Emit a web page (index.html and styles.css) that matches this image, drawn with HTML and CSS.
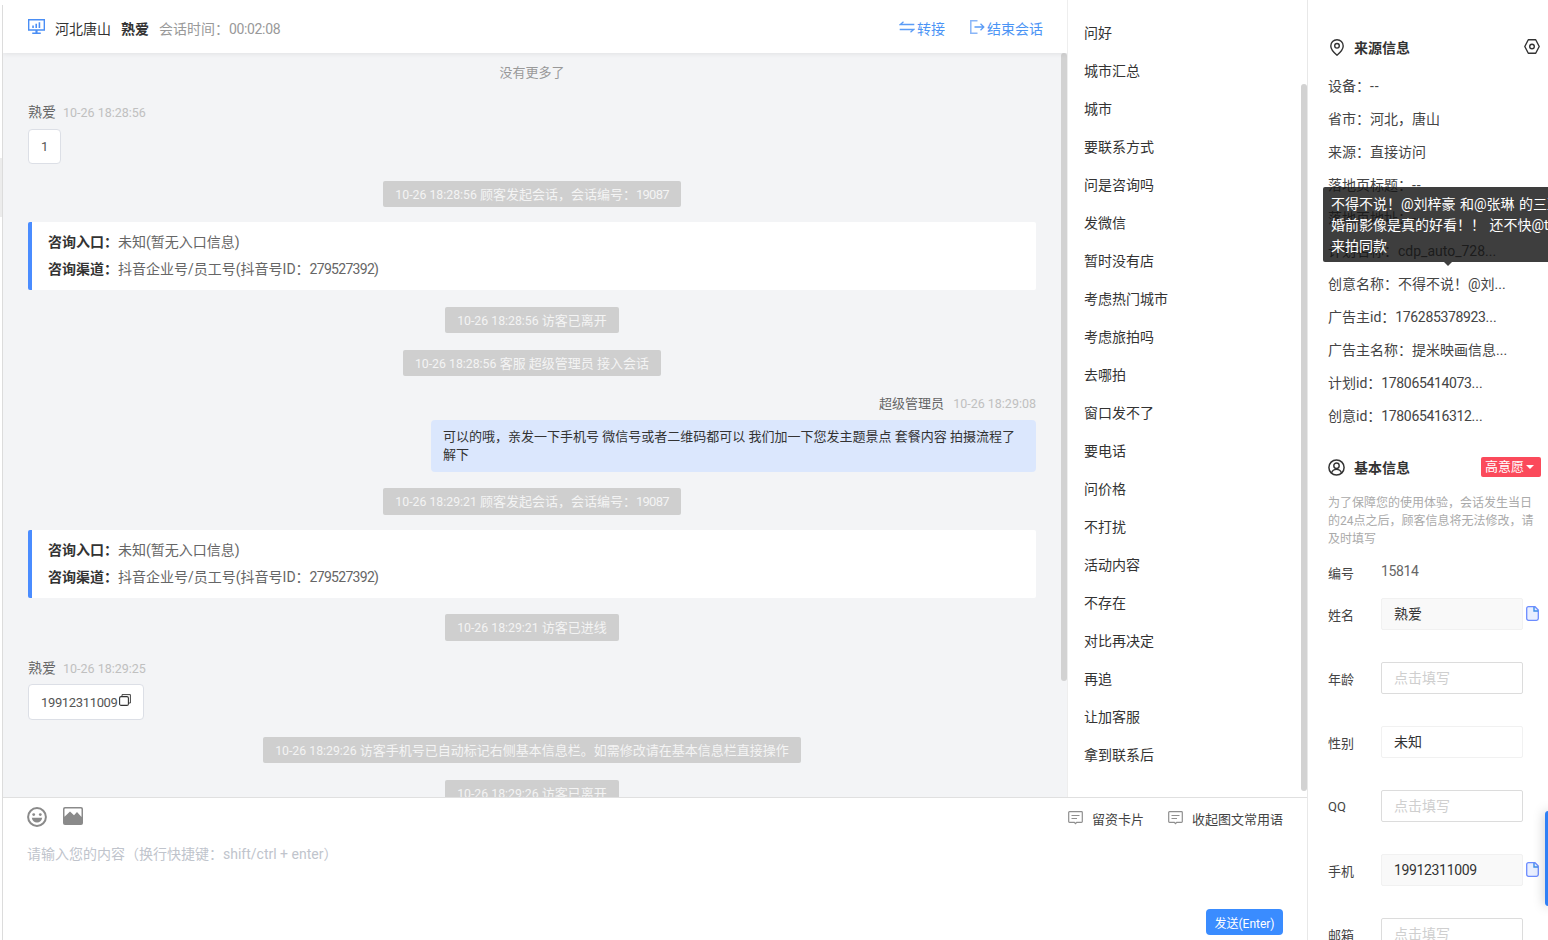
FILE: index.html
```html
<!DOCTYPE html>
<html lang="zh-CN">
<head>
<meta charset="utf-8">
<title>会话</title>
<link rel="stylesheet" href="styles.css">
</head>
<body>
<div class="app">
  <div class="rail"><div class="rail-handle"></div><div class="rail-line"></div></div>
  <div class="work">
    <div class="top">
      <section class="chat">
        <header class="chat-head">
          <svg class="ico-desktop" viewBox="0 0 16 14"><path d="M0 0h16v11H9v1.600h3V14H4v-1.400h3V11H0zM1.300 1.300v8.400h13.400V1.300z" fill="#4a8ef5"/><path d="M4 6h1.500v2.500H4zM7 4.500h1.500v4H7zM10 3h1.500v5.500H10z" fill="#4a8ef5"/></svg>
          <span class="head-city">河北唐山</span>
          <b class="head-name">熟爱</b>
          <span class="head-time">会话时间：<span class="num">00:02:08</span></span>
          <span class="head-actions">
            <a class="head-link"><svg class="ico-transfer" viewBox="0 0 16 12"><path d="M4.500.8 1.300 3.500h14M11.500 11.200l3.200-2.700H.7" fill="none" stroke="#5b9cf6" stroke-width="1.300"/></svg>转接</a>
            <a class="head-link head-link-end"><svg class="ico-exit" viewBox="0 0 15 14"><path d="M7.500.8H.8v12.400h6.700" fill="none" stroke="#8ab6f8" stroke-width="1.500"/><path d="M4.500 7h9M10.500 3.800 13.800 7l-3.300 3.200" fill="none" stroke="#5b9cf6" stroke-width="1.300"/></svg>结束会话</a>
          </span>
        </header>
        <div class="log">
          <div class="no-more">没有更多了</div>
          <div class="author author-first">熟爱<span class="stamp">10-26 18:28:56</span></div>
          <div class="bubble bubble-one">1</div>
          <div class="notice"><span class="notice-time">10-26 18:28:56</span> 顾客发起会话，会话编号：<span class="num">19087</span></div>
          <div class="card">
            <div><b>咨询入口：</b>未知(暂无入口信息)</div>
            <div><b>咨询渠道：</b>抖音企业号/员工号(抖音号ID：<span class="num">279527392</span>)</div>
          </div>
          <div class="notice"><span class="notice-time">10-26 18:28:56</span> 访客已离开</div>
          <div class="notice"><span class="notice-time">10-26 18:28:56</span> 客服 超级管理员 接入会话</div>
          <div class="author author-right">超级管理员<span class="stamp">10-26 18:29:08</span></div>
          <div class="bubble-me">可以的哦，亲发一下手机号 微信号或者二维码都可以 我们加一下您发主题景点 套餐内容 拍摄流程了解下</div>
          <div class="notice"><span class="notice-time">10-26 18:29:21</span> 顾客发起会话，会话编号：<span class="num">19087</span></div>
          <div class="card">
            <div><b>咨询入口：</b>未知(暂无入口信息)</div>
            <div><b>咨询渠道：</b>抖音企业号/员工号(抖音号ID：<span class="num">279527392</span>)</div>
          </div>
          <div class="notice"><span class="notice-time">10-26 18:29:21</span> 访客已进线</div>
          <div class="author">熟爱<span class="stamp">10-26 18:29:25</span></div>
          <div class="bubble"><span class="num">19912311009</span><svg class="ico-copy-msg" viewBox="0 0 12 12"><path d="M3 2.500V.6h8.400v8.400H9.500" fill="none" stroke="#444" stroke-width="1"/><rect x=".6" y="2.600" width="8.800" height="8.800" rx="1.500" fill="none" stroke="#333" stroke-width="1.100"/></svg></div>
          <div class="notice"><span class="notice-time">10-26 18:29:26</span> 访客手机号已自动标记右侧基本信息栏。如需修改请在基本信息栏直接操作</div>
          <div class="notice"><span class="notice-time">10-26 18:29:26</span> 访客已离开</div>
        </div>
        <div class="thumb thumb-chat"></div>
      </section>
      <aside class="quick">
        <div class="quick-item">问好</div>
        <div class="quick-item">城市汇总</div>
        <div class="quick-item">城市</div>
        <div class="quick-item">要联系方式</div>
        <div class="quick-item">问是咨询吗</div>
        <div class="quick-item">发微信</div>
        <div class="quick-item">暂时没有店</div>
        <div class="quick-item">考虑热门城市</div>
        <div class="quick-item">考虑旅拍吗</div>
        <div class="quick-item">去哪拍</div>
        <div class="quick-item">窗口发不了</div>
        <div class="quick-item">要电话</div>
        <div class="quick-item">问价格</div>
        <div class="quick-item">不打扰</div>
        <div class="quick-item">活动内容</div>
        <div class="quick-item">不存在</div>
        <div class="quick-item">对比再决定</div>
        <div class="quick-item">再追</div>
        <div class="quick-item">让加客服</div>
        <div class="quick-item">拿到联系后</div>
        <div class="thumb thumb-quick"></div>
      </aside>
    </div>
    <section class="composer">
      <div class="tools">
        <svg class="ico-emoji" viewBox="0 0 20 20"><circle cx="10" cy="10" r="8.900" fill="none" stroke="#8a8a8a" stroke-width="2"/><circle cx="6.700" cy="7.600" r="1.400" fill="#8a8a8a"/><circle cx="13.300" cy="7.600" r="1.400" fill="#8a8a8a"/><path d="M4.800 10.800h10.400c-.4 3-2.500 4.800-5.200 4.800s-4.800-1.800-5.200-4.800z" fill="#8a8a8a"/></svg>
        <svg class="ico-image" viewBox="0 0 20 18"><rect width="20" height="18" rx="2" fill="#8a8a8a"/><path d="M1.500 9.800V2.300c0-.5.300-.8.800-.8h15.400c.5 0 .8.300.8.800v7.700L14 5l-3 3.200L7 4.500z" fill="#fff"/></svg>
        <span class="tool-spacer"></span>
        <a class="tool-link"><svg class="ico-comment" viewBox="0 0 15 14"><path d="M1.500.7h12c.5 0 .8.300.8.800v9c0 .5-.3.800-.8.800H8.700l-1.200 1.400-1.200-1.400H1.500c-.5 0-.8-.3-.8-.8v-9c0-.5.300-.8.800-.8z" fill="none" stroke="#8f8f8f" stroke-width="1.200"/><path d="M3.500 4.500h8M3.500 7.500h5.500" stroke="#8f8f8f" stroke-width="1.100"/></svg>留资卡片</a>
        <a class="tool-link"><svg class="ico-comment" viewBox="0 0 15 14"><path d="M1.500.7h12c.5 0 .8.300.8.800v9c0 .5-.3.800-.8.800H8.700l-1.200 1.400-1.200-1.400H1.500c-.5 0-.8-.3-.8-.8v-9c0-.5.300-.8.800-.8z" fill="none" stroke="#8f8f8f" stroke-width="1.200"/><path d="M3.500 4.500h8M3.500 7.500h5.500" stroke="#8f8f8f" stroke-width="1.100"/></svg>收起图文常用语</a>
      </div>
      <div class="placeholder">请输入您的内容（换行快捷键：shift/ctrl + enter）</div>
      <div class="send-row"><button class="send">发送(Enter)</button></div>
    </section>
  </div>
  <aside class="info">
    <div class="info-head">
      <svg class="ico-pin" viewBox="0 0 14 17"><path d="M7 .8C3.500.8.800 3.500.8 7c0 3.700 3.300 6.800 6.200 9.200 2.900-2.400 6.200-5.500 6.200-9.200C13.200 3.500 10.500.8 7 .8z" fill="none" stroke="#333" stroke-width="1.400"/><circle cx="7" cy="6.800" r="2.300" fill="none" stroke="#333" stroke-width="1.400"/></svg>
      <b>来源信息</b>
      <svg class="ico-hex" viewBox="0 0 16 15"><path d="M4.300.8h7.400L15.200 7.500l-3.500 6.700H4.300L.8 7.500z" fill="none" stroke="#333" stroke-width="1.400" stroke-linejoin="round"/><circle cx="8" cy="7.500" r="2.300" fill="none" stroke="#333" stroke-width="1.400"/></svg>
    </div>
    <div class="info-row">设备：<span class="dash">--</span></div>
    <div class="info-row">省市：河北，唐山</div>
    <div class="info-row">来源：直接访问</div>
    <div class="info-row">落地页标题：<span class="dash">--</span></div>
    <div class="info-row">落地页地址：<span class="dash">--</span></div>
    <div class="info-row">计划名称：cdp_auto_728...</div>
    <div class="info-row">创意名称：不得不说！@刘...</div>
    <div class="info-row">广告主id：<span class="num">176285378923</span>...</div>
    <div class="info-row">广告主名称：提米映画信息...</div>
    <div class="info-row">计划id：<span class="num">178065414073</span>...</div>
    <div class="info-row">创意id：<span class="num">178065416312</span>...</div>
    <div class="info-head info-head-basic">
      <svg class="ico-user" viewBox="0 0 17 17"><circle cx="8.500" cy="8.500" r="7.600" fill="none" stroke="#333" stroke-width="1.500"/><circle cx="8.500" cy="6.700" r="2.700" fill="none" stroke="#333" stroke-width="1.400"/><path d="M3.500 14c.8-2.500 2.700-3.600 5-3.600s4.200 1.100 5 3.600" fill="none" stroke="#333" stroke-width="1.400"/></svg>
      <b>基本信息</b>
      <span class="tag">高意愿<i class="tag-caret"></i></span>
    </div>
    <p class="info-note">为了保障您的使用体验，会话发生当日的24点之后，顾客信息将无法修改，请及时填写</p>
    <div class="plain-row"><span class="field-label">编号</span><span class="plain-value num">15814</span></div>
    <div class="field"><span class="field-label">姓名</span><span class="box box-locked">熟爱</span><svg class="ico-copy" viewBox="0 0 13 15"><path d="M.7 2.500c0-1 .7-1.800 1.800-1.800h6.500l3.300 3.300v8.500c0 1-.7 1.800-1.800 1.800H2.500c-1 0-1.800-.8-1.800-1.800z" fill="#e9efff" stroke="#6c8cff" stroke-width="1.300"/><path d="M8 1v4h4" fill="none" stroke="#3f8fe8" stroke-width="1.400"/></svg></div>
    <div class="field"><span class="field-label">年龄</span><span class="box box-empty">点击填写</span></div>
    <div class="field"><span class="field-label">性别</span><span class="box box-plain">未知</span></div>
    <div class="field"><span class="field-label">QQ</span><span class="box box-empty">点击填写</span></div>
    <div class="field"><span class="field-label">手机</span><span class="box box-locked num">19912311009</span><svg class="ico-copy" viewBox="0 0 13 15"><path d="M.7 2.500c0-1 .7-1.800 1.800-1.800h6.500l3.300 3.300v8.500c0 1-.7 1.800-1.800 1.800H2.500c-1 0-1.800-.8-1.800-1.800z" fill="#e9efff" stroke="#6c8cff" stroke-width="1.300"/><path d="M8 1v4h4" fill="none" stroke="#3f8fe8" stroke-width="1.400"/></svg></div>
    <div class="field"><span class="field-label">邮箱</span><span class="box box-empty">点击填写</span></div>
    <div class="tooltip">不得不说！@刘梓豪 和@张琳 的三亚<br>婚前影像是真的好看！！ 还不快@tag<br>来拍同款<i class="tooltip-arrow"></i></div>
    <div class="float-tab"></div>
  </aside>
</div>
</body>
</html>
```
FILE: styles.css
```css
* { box-sizing: border-box; }
html, body { margin: 0; height: 100%; overflow: hidden; background: #fff; }
body { font-family: Roboto, "Noto Sans CJK SC", sans-serif; font-size: 14px; color: #333; }
svg { display: block; flex: none; }
b { font-weight: 500; }
.num { letter-spacing: -.35px; }
.dash { letter-spacing: 1px; }

.app { display: flex; height: 940px; width: 1548px; overflow: hidden; }
.rail { width: 3px; flex: none; display: flex; }
.rail-handle { width: 2px; height: 59px; margin-top: 158px; background: #ececec; }
.rail-line { width: 1px; margin-top: 5px; background: #dcdcdc; }

.work { width: 1305px; flex: none; display: flex; flex-direction: column; border-right: 1px solid #e8e8e8; }
.top { height: 797px; flex: none; display: flex; }

.chat { width: 1064px; flex: none; position: relative; display: flex; flex-direction: column; background: #f3f4f6; overflow: hidden; }
.chat-head { height: 53px; flex: none; display: flex; align-items: center; padding: 3px 24px 0 25px; background: #fff; box-shadow: 0 1px 5px rgba(0,0,0,.08); position: relative; z-index: 1; }
.ico-desktop { width: 17px; height: 15px; margin: -3px 10px 0 0; }
.head-city { color: #333; }
.head-name { margin-left: 10px; font-weight: 700; color: #333; }
.head-time { margin-left: 10px; color: #999; }
.head-actions { margin-left: auto; display: flex; }
.head-link { display: flex; align-items: center; color: #4b94f5; }
.head-link-end { margin-left: 25px; }
.ico-transfer { width: 16px; height: 12px; margin: -3px 2px 0 0; }
.ico-exit { width: 15px; height: 14px; margin: -3px 2px 0 0; }

.log { flex: 1; min-height: 0; padding: 10px 31px 0 25px; display: flex; flex-direction: column; overflow: hidden; }
.no-more { height: 20px; line-height: 20px; flex: none; text-align: center; font-size: 13px; color: #999; }
.author { height: 20px; line-height: 20px; flex: none; margin-top: 17.500px; color: #666; font-size: 14px; }
.author-first { margin-top: 19px; }
.author-right { text-align: right; font-size: 13px; }
.author-right .stamp { margin-left: 9px; }
.stamp { margin-left: 7px; font-size: 12.500px; color: #c0c0c0; }
.bubble { align-self: flex-start; flex: none; display: flex; align-items: center; height: 36px; margin-top: 6px; padding: 0 12px; font-size: 13px; color: #555; background: #fff; border: 1px solid #dcdfe6; border-radius: 4px; }
.bubble-one { margin-top: 7px; height: 35px; width: 33px; }
.ico-copy-msg { width: 12px; height: 12px; margin: -4px 0 0 1px; }
.bubble-me { align-self: flex-end; flex: none; width: 605px; margin-top: 6px; padding: 8px 12px; font-size: 13px; line-height: 18px; color: #333; background: #dbe7fd; border-radius: 4px; }
.notice { align-self: center; flex: none; height: 26.500px; line-height: 27px; margin-top: 16.500px; padding: 0 12px; white-space: nowrap; font-size: 13px; color: #f4f4f4; background: #cfcfcf; border-radius: 2px; }
.notice-time { font-size: 12.300px; }
.notice .num { letter-spacing: -.8px; }
.card { flex: none; height: 68px; margin-top: 15px; padding: 7px 16px; line-height: 27px; color: #666; background: #fff; border-left: 4px solid #4a8cff; border-radius: 2px; }
.card b { color: #333; font-weight: 700; }
.card .num { letter-spacing: -.7px; }

.thumb { position: absolute; width: 6px; background: #d2d2d2; border-radius: 3px; }
.thumb-chat { top: 53px; right: 0; height: 628px; }
.thumb-quick { top: 84px; right: 0; height: 707px; }

.quick { flex: 1; min-width: 0; position: relative; padding: 14px 0 0 16px; border-left: 1px solid #eee; background: #fff; }
.quick-item { height: 38px; line-height: 39px; color: #333; }

.composer { flex: 1; min-height: 0; border-top: 2px solid #e0e0e0; padding: 9px 24px 0 24px; display: flex; flex-direction: column; margin-top: -1px; background: #fff; }
.tools { display: flex; align-items: flex-start; height: 22px; font-size: 13px; }
.ico-emoji { width: 20px; height: 20px; }
.ico-image { width: 20px; height: 18px; margin-left: 16px; }
.tool-spacer { flex: 1; }
.tool-link { display: flex; align-items: center; margin: 1px 0 0 24px; height: 20px; color: #444; }
.ico-comment { width: 15px; height: 14px; margin-right: 9px; }
.placeholder { margin-top: 15px; height: 20px; line-height: 20px; font-size: 14px; color: #c0c4cc; }
.send-row { margin-top: auto; margin-bottom: 5px; display: flex; justify-content: flex-end; }
.send { width: 77px; height: 26px; padding: 0; border: 0; border-radius: 4px; background: #3a8cff; color: #fff; font: 12px Roboto, "Noto Sans CJK SC", sans-serif; }

.info { position: relative; flex: 1; min-width: 0; padding: 35px 0 0 20px; overflow: hidden; background: #fff; }
.info-head { height: 24px; display: flex; align-items: center; margin-bottom: 10px; }
.info-head b { font-weight: 700; color: #333; }
.ico-pin { width: 14px; height: 17px; margin: 0 10px 0 2px; }
.ico-hex { width: 16px; height: 15px; margin: -2px 8px 0 auto; }
.info-row { height: 33px; line-height: 35px; color: #444; white-space: nowrap; }
.info-head-basic { margin-top: 23px; margin-bottom: 15px; }
.ico-user { width: 17px; height: 17px; margin: 0 9px 0 0; }
.tag { margin-left: auto; margin-right: 7px; width: 60px; height: 20px; line-height: 20px; padding-left: 4px; font-size: 13px; color: #fff; background: #fb4a5b; border-radius: 2px; display: flex; align-items: center; }
.tag-caret { width: 0; height: 0; margin-left: 2px; border: 4px solid transparent; border-top: 4px solid #fff; border-bottom: 0; }
.info-note { margin: 0; padding-right: 12px; font-size: 12px; line-height: 18px; color: #aaa; }
.plain-row { display: flex; align-items: center; height: 24px; margin: 11px 0 14.500px; }
.field-label { width: 53px; flex: none; margin-top: 2px; font-size: 13px; color: #444; }
.plain-value { color: #666; font-size: 14px; }
.field { display: flex; align-items: center; height: 32px; margin-bottom: 32px; }
.box { width: 142px; flex: none; height: 32px; line-height: 31px; padding: 0 12px; border: 1px solid #f1f1f1; border-radius: 2px; color: #333; }
.box-locked { background: #f9f9f9; }
.box-empty { border-color: #dcdcdc; color: #cfcfcf; }
.ico-copy { width: 13px; height: 15px; margin-left: 3px; }

.tooltip { position: absolute; left: 15px; top: 187px; width: 260px; height: 75px; padding: 7px 0 0 8px; line-height: 21px; white-space: nowrap; word-spacing: 1px; color: #fff; background: rgba(20,20,20,.82); border-radius: 2px; }
.tooltip-arrow { position: absolute; left: 121px; bottom: -4px; width: 0; height: 0; border: 4px solid transparent; border-top-color: #404040; border-bottom: 0; }
.float-tab { position: absolute; right: -4px; top: 811px; width: 7px; height: 95px; background: #2f80f5; border-radius: 4px; box-shadow: 0 0 12px rgba(0,0,0,.25); }
```
